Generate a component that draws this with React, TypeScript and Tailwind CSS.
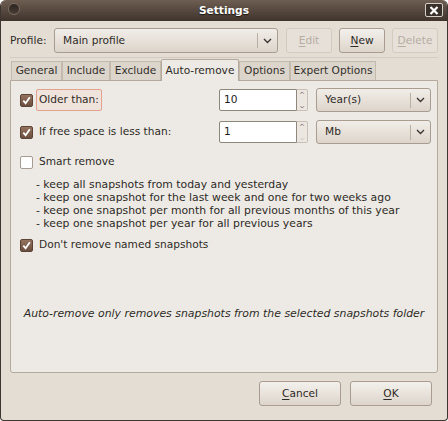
import React from "react";

const Chevron = ({ className = "" }: { className?: string }) => (
  <svg width="9" height="6" viewBox="0 0 9 6" className={className}>
    <path d="M1 1 L4.5 4.5 L8 1" fill="none" stroke="#3c3631" strokeWidth="1.4" />
  </svg>
);

const Btn = ({
  label,
  mnemonic,
  disabled = false,
  className = "",
}: {
  label: string;
  mnemonic: number;
  disabled?: boolean;
  className?: string;
}) => (
  <div
    className={`flex items-center justify-center rounded-[3px] border ${
      disabled
        ? "border-[#d3cbc1] bg-[#e6e0d8] text-[#b6ada3]"
        : "border-[#a89d90] bg-gradient-to-b from-[#f3f0ec] to-[#ddd5cb] text-[#2e2a26]"
    } ${className}`}
  >
    <span>
      {label.slice(0, mnemonic)}
      <span className="underline underline-offset-2">{label[mnemonic]}</span>
      {label.slice(mnemonic + 1)}
    </span>
  </div>
);

const Combo = ({ value, className = "" }: { value: string; className?: string }) => (
  <div
    className={`flex items-center rounded-[3px] border border-[#a89d90] bg-gradient-to-b from-[#f1ede8] to-[#ddd5cb] text-[#2e2a26] ${className}`}
  >
    <span className="flex-1 pl-[8px]">{value}</span>
    <div className="h-[15px] w-px bg-[#b9afa3]" />
    <div className="flex w-[19px] justify-center">
      <Chevron />
    </div>
  </div>
);

const Spin = ({ value, downDisabled = false }: { value: string; downDisabled?: boolean }) => (
  <div className="flex h-[22px] w-[89px]">
    <div className="flex flex-1 items-center rounded-l-[2px] border border-[#8f867c] bg-white pl-[4px] text-[#1f1c19]">
      {value}
    </div>
    <div className="flex w-[11px] flex-col items-center justify-center rounded-r-[2px] border border-l-0 border-[#c9c1b7] bg-[#ebe6e0] text-[7px] leading-[9px]">
      <span className="text-[#6d655d]">^</span>
      <span className={`rotate-180 ${downDisabled ? "text-[#c8c0b6]" : "text-[#6d655d]"}`}>^</span>
    </div>
  </div>
);

const Check = ({ checked }: { checked: boolean }) =>
  checked ? (
    <div className="flex h-[13px] w-[13px] items-center justify-center rounded-[2px] border border-[#5b4335] bg-gradient-to-b from-[#94735f] to-[#6c4f40]">
      <svg width="9" height="9" viewBox="0 0 9 9">
        <path d="M1.3 4.6 L3.6 7.2 L7.8 1.2" fill="none" stroke="white" strokeWidth="1.8" />
      </svg>
    </div>
  ) : (
    <div className="h-[13px] w-[13px] rounded-[2px] border border-[#a69d92] bg-white" />
  );

const tabs = [
  { name: "General", w: "w-[51px]" },
  { name: "Include", w: "w-[48px]" },
  { name: "Exclude", w: "w-[51px]" },
  { name: "Auto-remove", w: "w-[78px]", active: true },
  { name: "Options", w: "w-[51px]" },
  { name: "Expert Options", w: "w-[86px]" },
];

export default function App() {
  return (
    <div className="h-[421px] w-[448px] bg-white font-['DejaVu_Sans',sans-serif] text-[10.6px] text-[#2e2a26]">
      <div className="flex h-[421px] flex-col overflow-hidden rounded-t-[6px] rounded-b-[4px] border-x border-b border-[#3d3530] bg-[#e4ddd4]">
        {/* title bar */}
        <div className="relative flex h-[21px] shrink-0 items-center justify-center bg-gradient-to-b from-[#6e5e52] to-[#3f342d]">
          <div className="absolute left-[7px] top-[3px] h-[12px] w-[12px] rounded-full border border-[#7c6d62] bg-gradient-to-b from-[#2c241f] to-[#4a3e36]" />
          <span className="text-[10.6px] font-bold text-white [text-shadow:0_1px_1px_#1c1612]">Settings</span>
          <div className="absolute right-[4px] top-[3px] flex h-[14px] w-[18px] items-center justify-center rounded-[2px] border border-[#d6cfc8] bg-[#3a302a]">
            <svg width="10" height="9" viewBox="0 0 10 9">
              <path d="M1.5 1 L8.5 8 M8.5 1 L1.5 8" stroke="white" strokeWidth="2.2" />
            </svg>
          </div>
        </div>

        <div className="flex flex-1 flex-col px-[9px]">
          {/* profile row */}
          <div className="mt-[7px] flex h-[25px] items-center">
            <span className="w-[44px]">Profile:</span>
            <Combo value="Main profile" className="h-[25px] w-[224px]" />
            <Btn label="Edit" mnemonic={0} disabled className="ml-[8px] h-[25px] w-[46px]" />
            <Btn label="New" mnemonic={0} className="ml-[7px] h-[25px] w-[46px]" />
            <Btn label="Delete" mnemonic={0} disabled className="ml-[7px] h-[25px] w-[46px]" />
          </div>
          <div className="mt-[4px] h-px bg-[#d4ccc2]" />

          {/* tabs */}
          <div className="relative z-10 mt-[1px] flex h-[21px] items-end pl-px">
            {tabs.map((t) =>
              t.active ? (
                <div
                  key={t.name}
                  className={`${t.w} -mb-px flex h-[22px] items-center justify-center rounded-t-[2px] border border-b-0 border-[#b3a99c] bg-[#edeae5]`}
                >
                  {t.name}
                </div>
              ) : (
                <div
                  key={t.name}
                  className={`${t.w} flex h-[19px] items-center justify-center border border-b-0 border-[#c3b9ad] bg-[#dcd5cb] text-[#33302c]`}
                >
                  {t.name}
                </div>
              )
            )}
          </div>

          {/* panel */}
          <div className="flex h-[293px] flex-col rounded-b-[3px] border border-[#b3a99c] bg-[#edeae5] pl-[9px] pr-[6px]">
            <div className="mt-[7px] flex h-[24px] items-center">
              <Check checked />
              <span className="ml-[3px] rounded-[2px] border border-[#e2a18c] bg-[#f0e3db] px-[2px] py-[2px]">
                Older than:
              </span>
              <div className="ml-auto">
                <Spin value="10" />
              </div>
              <Combo value="Year(s)" className="ml-[8px] h-[24px] w-[115px]" />
            </div>

            <div className="mt-[8px] flex h-[24px] items-center">
              <Check checked />
              <span className="ml-[6px]">If free space is less than:</span>
              <div className="ml-auto">
                <Spin value="1" downDisabled />
              </div>
              <Combo value="Mb" className="ml-[8px] h-[24px] w-[115px]" />
            </div>

            <div className="mt-[6px] flex h-[24px] items-center">
              <Check checked={false} />
              <span className="ml-[6px]">Smart remove</span>
            </div>

            <div className="mt-[4px] flex flex-col pl-[16px] text-[10.85px] leading-[13px]">
              <span>- keep all snapshots from today and yesterday</span>
              <span>- keep one snapshot for the last week and one for two weeks ago</span>
              <span>- keep one snapshot per month for all previous months of this year</span>
              <span>- keep one snapshot per year for all previous years</span>
            </div>

            <div className="mt-[3px] flex h-[24px] items-center">
              <Check checked />
              <span className="ml-[6px]">Don't remove named snapshots</span>
            </div>

            <div className="mt-[50px] pr-[3px] text-center text-[10.9px] italic leading-[13px]">
              Auto-remove only removes snapshots from the selected snapshots folder
            </div>
          </div>

          {/* dialog buttons */}
          <div className="mt-[8px] flex justify-end pr-[6px]">
            <Btn label="Cancel" mnemonic={0} className="h-[25px] w-[82px]" />
            <Btn label="OK" mnemonic={0} className="ml-[9px] h-[25px] w-[82px]" />
          </div>
        </div>
      </div>
    </div>
  );
}
